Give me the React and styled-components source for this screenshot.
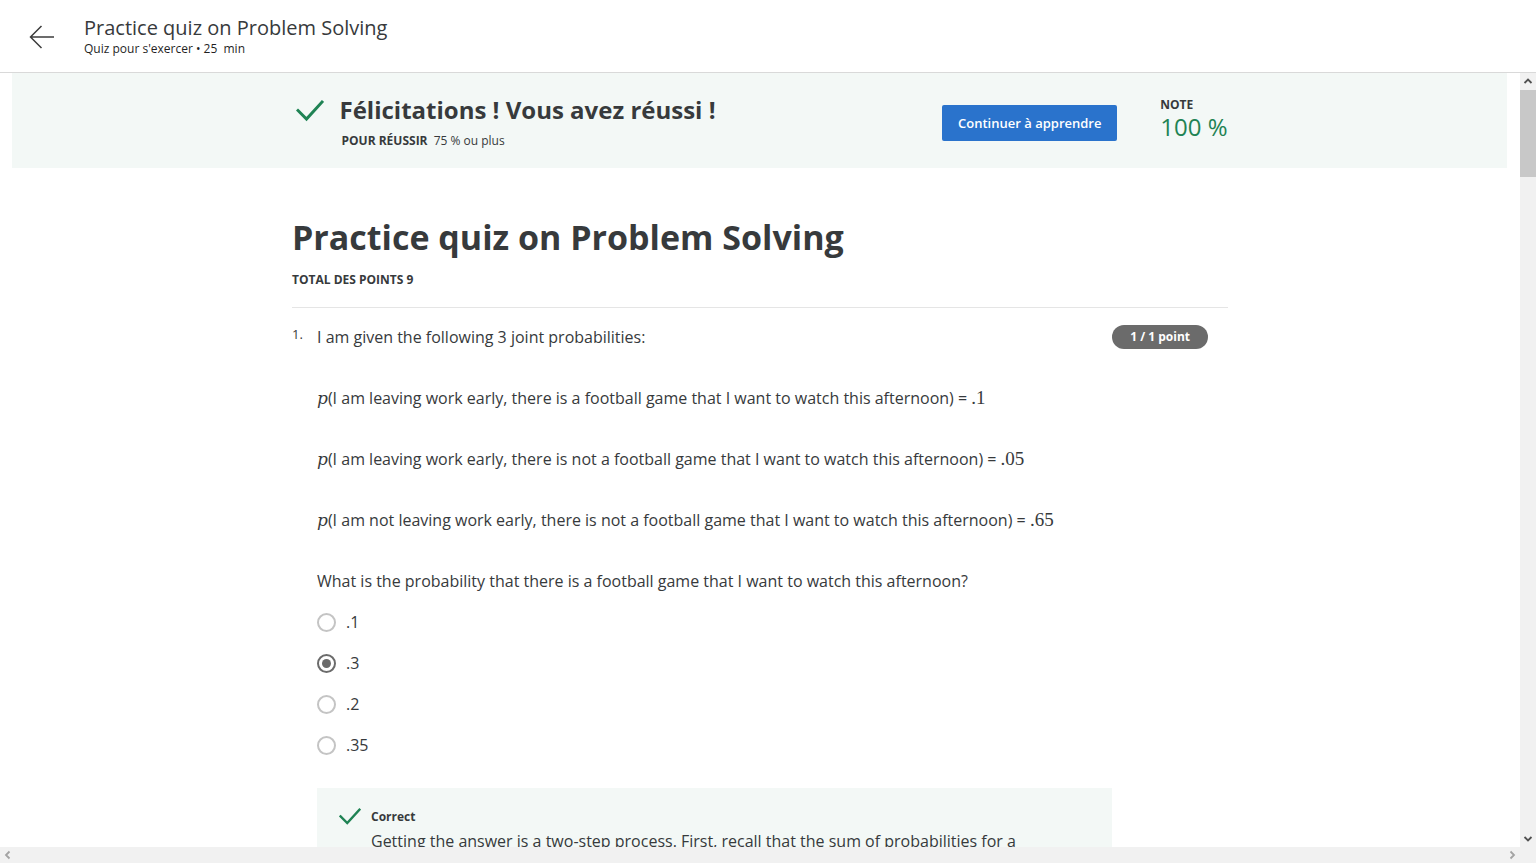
import React from 'react';
import styled, { createGlobalStyle } from 'styled-components';

const GlobalStyle = createGlobalStyle`
  html, body {
    margin: 0;
    padding: 0;
    height: 100%;
    overflow: hidden;
    background: #fff;
  }
  body {
    font-family: "Open Sans", "Noto Sans", "Liberation Sans", sans-serif;
    color: #373a3c;
  }
  * { box-sizing: border-box; }
`;

const options = ['.1', '.3', '.2', '.35'];
const selected = 1;

const statements = [
  { text: 'I am leaving work early, there is a football game that I want to watch this afternoon', value: '.1' },
  { text: 'I am leaving work early, there is not a football game that I want to watch this afternoon', value: '.05' },
  { text: 'I am not leaving work early, there is not a football game that I want to watch this afternoon', value: '.65' },
];

const CheckIcon = ({ size = 28 }) => (
  <svg width={size} height={size} viewBox="0 0 28 28" fill="none">
    <path d="M2 14.5 L10.5 23 L26 6" stroke="#1f8354" strokeWidth="3" strokeLinecap="square" />
  </svg>
);

const Chevron = ({ dir, color }) => {
  const d = {
    up: 'M1.5 7 L5 3.5 L8.5 7',
    down: 'M1.5 3 L5 6.5 L8.5 3',
    left: 'M6.5 1.5 L3 5 L6.5 8.5',
    right: 'M3.5 1.5 L7 5 L3.5 8.5',
  }[dir];
  return (
    <svg width="10" height="10" viewBox="0 0 10 10" fill="none">
      <path d={d} stroke={color} strokeWidth="1.8" />
    </svg>
  );
};

const App = () => {
  return (
    <Page>
      <GlobalStyle />
      <Header>
        <BackButton aria-label="Retour">
          <svg width="26" height="24" viewBox="0 0 26 24" fill="none">
            <path d="M25 12 H1.5 M12.5 1 L1.5 12 L12.5 23" stroke="#3c3c3c" strokeWidth="1.5" />
          </svg>
        </BackButton>
        <HeaderText>
          <HeaderTitle>Practice quiz on Problem Solving</HeaderTitle>
          <HeaderSub>Quiz pour s'exercer • 25&nbsp; min</HeaderSub>
        </HeaderText>
      </Header>

      <Viewport>
        <Scroller>
          <Banner>
            <BannerInner>
              <BannerLeft>
                <BannerTitleRow>
                  <CheckIcon />
                  <BannerTitle>Félicitations ! Vous avez réussi !</BannerTitle>
                </BannerTitleRow>
                <BannerSub>
                  <strong>POUR RÉUSSIR</strong> 75 % ou plus
                </BannerSub>
              </BannerLeft>
              <ContinueButton>Continuer à apprendre</ContinueButton>
              <Grade>
                <GradeLabel>NOTE</GradeLabel>
                <GradeValue>100 %</GradeValue>
              </Grade>
            </BannerInner>
          </Banner>

          <Column>
            <QuizTitle>Practice quiz on Problem Solving</QuizTitle>
            <TotalPoints>TOTAL DES POINTS 9</TotalPoints>
            <Divider />

            <Question>
              <QuestionHead>
                <QNumber>1.</QNumber>
                <QText>I am given the following 3 joint probabilities:</QText>
                <PointBadge>1 / 1 point</PointBadge>
              </QuestionHead>
              <QBody>
                {statements.map((s) => (
                  <Para key={s.value}>
                    <MathP>p</MathP>({s.text}) = <MathNum>{s.value}</MathNum>
                  </Para>
                ))}
                <Para>What is the probability that there is a football game that I want to watch this afternoon?</Para>
                <Options>
                  {options.map((o, i) => (
                    <Option key={o}>
                      <Radio $checked={i === selected} />
                      <span>{o}</span>
                    </Option>
                  ))}
                </Options>
                <Feedback>
                  <FeedbackHead>
                    <CheckIcon size={22} />
                    <span>Correct</span>
                  </FeedbackHead>
                  <FeedbackText>
                    Getting the answer is a two-step process. First, recall that the sum of probabilities for a
                    complete set of outcomes must equal one, so the remaining joint probability is .2. Second,
                    add the two joint probabilities where there is a football game: .1 + .2 = .3.
                  </FeedbackText>
                </Feedback>
              </QBody>
            </Question>
          </Column>
        </Scroller>

        <VBar>
          <BarButton><Chevron dir="up" color="#505050" /></BarButton>
          <VTrack>
            <VThumb />
          </VTrack>
          <BarButton><Chevron dir="down" color="#505050" /></BarButton>
        </VBar>
        <HBar>
          <BarButton><Chevron dir="left" color="#a3a3a3" /></BarButton>
          <HTrack />
          <BarButton><Chevron dir="right" color="#a3a3a3" /></BarButton>
        </HBar>
        <Corner />
      </Viewport>
    </Page>
  );
};

export default App;

const Page = styled.div`
  height: 100vh;
  display: flex;
  flex-direction: column;
`;

const Header = styled.header`
  flex: 0 0 73px;
  display: flex;
  align-items: center;
  border-bottom: 1px solid #d9d9d9;
  padding: 0 0 0 28px;
`;

const BackButton = styled.button`
  width: 28px;
  height: 28px;
  padding: 0;
  border: none;
  background: none;
  display: flex;
  align-items: center;
  justify-content: center;
  margin: 2px 28px 0 0;
`;

const HeaderText = styled.div`
  display: flex;
  flex-direction: column;
`;

const HeaderTitle = styled.div`
  font-size: 20px;
  line-height: 26px;
  color: #373a3c;
`;

const HeaderSub = styled.div`
  font-size: 12px;
  line-height: 16px;
  color: #1f1f1f;
`;

const Viewport = styled.div`
  flex: 1;
  min-height: 0;
  display: grid;
  grid-template-columns: 1fr 16px;
  grid-template-rows: 1fr 16px;
`;

const Scroller = styled.main`
  overflow: hidden;
  min-height: 0;
`;

const VBar = styled.div`
  background: #f1f1f1;
  display: flex;
  flex-direction: column;
`;

const HBar = styled.div`
  background: #f1f1f1;
  display: flex;
`;

const Corner = styled.div`
  background: #f1f1f1;
`;

const BarButton = styled.div`
  flex: 0 0 16px;
  width: 16px;
  height: 16px;
  display: flex;
  align-items: center;
  justify-content: center;
`;

const VTrack = styled.div`
  flex: 1;
  padding-top: 1px;
`;

const VThumb = styled.div`
  height: 87px;
  background: #c8c8c8;
`;

const HTrack = styled.div`
  flex: 1;
`;

const Banner = styled.section`
  margin: 0 13px 0 12px;
  background: #f3f8f6;
  padding: 21px 0 18px;
`;

const BannerInner = styled.div`
  width: 936px;
  margin: 0 auto;
  display: flex;
  align-items: flex-start;
`;

const BannerLeft = styled.div`
  flex: 1;
  padding-left: 4px;
`;

const BannerTitleRow = styled.div`
  display: flex;
  align-items: center;
  gap: 16px;
`;

const BannerTitle = styled.h2`
  margin: 0;
  font-size: 24px;
  line-height: 32px;
  font-weight: 700;
  color: #373a3c;
`;

const BannerSub = styled.div`
  margin: 6px 0 0 46px;
  font-size: 12px;
  line-height: 18px;
  color: #373a3c;

  strong {
    font-weight: 700;
    margin-right: 3px;
  }
`;

const ContinueButton = styled.button`
  margin-top: 11px;
  width: 175px;
  height: 36px;
  border: none;
  border-radius: 2px;
  background: #2a73cc;
  color: #fff;
  font-family: inherit;
  font-size: 13px;
  font-weight: 600;
`;

const Grade = styled.div`
  margin: 3px 0 0 43px;
  white-space: nowrap;
`;

const GradeLabel = styled.div`
  font-size: 12px;
  line-height: 16px;
  font-weight: 700;
  color: #373a3c;
`;

const GradeValue = styled.div`
  font-size: 24px;
  line-height: 28px;
  color: #1f8354;
`;

const Column = styled.div`
  width: 936px;
  margin: 0 auto;
  padding-top: 45px;
`;

const QuizTitle = styled.h1`
  margin: 0;
  font-size: 34px;
  line-height: 48px;
  font-weight: 700;
  color: #373a3c;
`;

const TotalPoints = styled.div`
  margin-top: 11px;
  font-size: 12px;
  line-height: 16px;
  font-weight: 700;
  color: #373a3c;
`;

const Divider = styled.hr`
  margin: 19px 0 0;
  border: none;
  border-top: 1px solid #e5e5e5;
`;

const Question = styled.div`
  padding: 17px 20px 0 0;
`;

const QuestionHead = styled.div`
  display: flex;
  align-items: center;
`;

const QNumber = styled.span`
  width: 25px;
  font-size: 13px;
  line-height: 24px;
  align-self: flex-start;
  margin-top: -3px;
`;

const QText = styled.span`
  flex: 1;
  font-size: 16px;
  line-height: 24px;
`;

const PointBadge = styled.span`
  background: #6b6b6b;
  color: #fff;
  font-size: 12px;
  font-weight: 700;
  line-height: 24px;
  height: 24px;
  padding: 0 18px;
  border-radius: 12px;
`;

const QBody = styled.div`
  padding-left: 25px;
`;

const Para = styled.p`
  margin: 37px 0 0;
  font-size: 16px;
  line-height: 24px;
  color: #373a3c;
`;

const MathP = styled.span`
  font-family: "DejaVu Serif", "Liberation Serif", serif;
  font-style: italic;
  font-size: 17px;
`;

const MathNum = styled.span`
  font-family: "Liberation Serif", "DejaVu Serif", serif;
  font-size: 19px;
`;

const Options = styled.div`
  margin-top: 17px;
  display: flex;
  flex-direction: column;
  gap: 17px;
`;

const Option = styled.label`
  display: flex;
  align-items: center;
  gap: 10px;
  font-size: 16px;
  line-height: 24px;
`;

const Radio = styled.span`
  width: 19px;
  height: 19px;
  border-radius: 50%;
  border: 2px solid ${(p) => (p.$checked ? '#6b6b6b' : '#c4c4c4')};
  display: flex;
  align-items: center;
  justify-content: center;

  &::after {
    content: '';
    width: 9px;
    height: 9px;
    border-radius: 50%;
    background: ${(p) => (p.$checked ? '#6b6b6b' : 'transparent')};
  }
`;

const Feedback = styled.div`
  margin-top: 31px;
  width: 795px;
  background: #f3f8f6;
  padding: 17px 22px 24px;
`;

const FeedbackHead = styled.div`
  display: flex;
  align-items: center;
  gap: 10px;
  font-size: 12px;
  font-weight: 700;
  color: #373a3c;
`;

const FeedbackText = styled.p`
  margin: 2px 0 0 32px;
  max-width: 680px;
  font-size: 16px;
  line-height: 24px;
`;
